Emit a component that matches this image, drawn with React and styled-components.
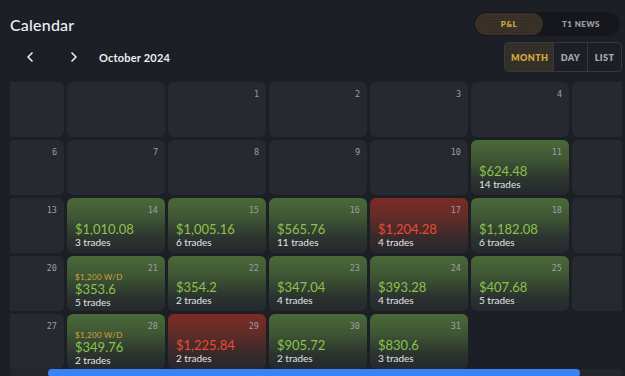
import React, { useLayoutEffect, useRef, useState } from 'react'
import styled, { createGlobalStyle, css } from 'styled-components'
import { ChevronLeft, ChevronRight } from 'lucide-react'

const GlobalStyle = createGlobalStyle`
  html, body {
    margin: 0;
    padding: 0;
    background: #1c1f26;
    overflow: hidden;
  }
  * {
    box-sizing: border-box;
  }
`

const Page = styled.div`
  padding: 12px 3px 0 10px;
  font-family: Lato, "Noto Sans", sans-serif;
  color: #eceef1;
`

const TopBar = styled.div`
  display: flex;
  justify-content: space-between;
  align-items: center;
  height: 24px;
`

const Title = styled.h1`
  margin: 0;
  font-size: 16px;
  font-weight: 500;
  letter-spacing: 0.2px;
`

const Tabs = styled.div`
  display: flex;
  padding: 1px;
  margin-right: 2px;
  border-radius: 12px;
  background: #15171c;
`

const dots = css`
  background-image: radial-gradient(rgba(0, 0, 0, 0.18) 0.6px, transparent 0.8px);
  background-size: 3px 3px;
`

const Tab = styled.button`
  width: ${p => p.$w}px;
  height: 22px;
  border: 0;
  border-radius: 11px;
  font-family: inherit;
  font-size: 8px;
  font-weight: 800;
  letter-spacing: 0.4px;
  color: ${p => (p.$active ? '#d2a63c' : '#9a9da4')};
  background-color: ${p => (p.$active ? '#3a3228' : 'transparent')};
  ${p => p.$active && dots}
`

const SubBar = styled.div`
  display: flex;
  justify-content: space-between;
  align-items: center;
  height: 30px;
  margin-top: 6px;
`

const Nav = styled.div`
  display: flex;
  align-items: center;
  padding-left: 5px;
`

const NavButton = styled.button`
  display: flex;
  align-items: center;
  justify-content: center;
  width: 30px;
  height: 28px;
  padding: 0;
  margin-right: ${p => p.$gap || 0}px;
  border: 0;
  background: transparent;
  color: #eceef1;
`

const MonthLabel = styled.span`
  margin-left: 10px;
  font-size: 11px;
  font-weight: 700;
  letter-spacing: 0.2px;
`

const Segmented = styled.div`
  display: flex;
  height: 30px;
  border: 1px solid #353840;
  border-radius: 4px;
  overflow: hidden;
`

const Segment = styled.button`
  width: ${p => p.$w}px;
  border: 0;
  border-left: ${p => (p.$first ? '0' : '1px solid #353840')};
  font-family: inherit;
  font-size: 9px;
  font-weight: 800;
  letter-spacing: 0.4px;
  color: ${p => (p.$active ? '#d2a63c' : '#a4a7ad')};
  background-color: ${p => (p.$active ? '#35302a' : 'transparent')};
  ${p => p.$active && dots}
`

const Scroller = styled.div`
  margin-top: 10px;
  overflow-x: auto;
  overflow-y: hidden;
  scrollbar-width: none;

  &::-webkit-scrollbar {
    display: none;
  }
`

const ScrollTrack = styled.div`
  display: flex;
  height: 8px;
  border-radius: 4px;
  background: #23262c;
`

const ScrollThumb = styled.div`
  height: 100%;
  border-radius: 4px;
  background: #3b82f6;
`

const Grid = styled.div`
  display: grid;
  grid-template-columns: repeat(7, 98px);
  grid-auto-rows: 55px;
  gap: 3px;
  width: max-content;
`

const tones = {
  win: 'linear-gradient(180deg, #4a6938 0%, #3f5734 35%, #2c342f 72%, #25282d 100%)',
  loss: 'linear-gradient(180deg, #7c2b25 0%, #622c27 35%, #382a2b 72%, #27272c 100%)',
}

const Cell = styled.div`
  display: flex;
  flex-direction: column;
  padding: 7px 7px 5px 8px;
  border-radius: 6px;
  background: ${p => (p.$tone ? tones[p.$tone] : '#262930')};
`

const DayNum = styled.span`
  align-self: flex-end;
  font-family: "DejaVu Sans Mono", "Liberation Mono", monospace;
  font-size: 8.5px;
  line-height: 10px;
  color: #9b9ea5;
`

const Body = styled.div`
  margin-top: auto;
  display: flex;
  flex-direction: column;
`

const Withdrawal = styled.span`
  font-size: 8px;
  line-height: 9px;
  letter-spacing: 0.3px;
  color: #d2a43a;
`

const Amount = styled.span`
  font-size: 13px;
  line-height: 14px;
  color: ${p => (p.$loss ? '#ec4a35' : '#8cc24b')};
`

const Trades = styled.span`
  font-size: 10px;
  line-height: 12px;
  color: #e3e4e7;
`

const stats = {
  11: ['$624.48', 14],
  14: ['$1,010.08', 3],
  15: ['$1,005.16', 6],
  16: ['$565.76', 11],
  17: ['$1,204.28', 4, true],
  18: ['$1,182.08', 6],
  21: ['$353.6', 5, false, '$1,200 W/D'],
  22: ['$354.2', 2],
  23: ['$347.04', 4],
  24: ['$393.28', 4],
  25: ['$407.68', 5],
  28: ['$349.76', 2, false, '$1,200 W/D'],
  29: ['$1,225.84', 2, true],
  30: ['$905.72', 2],
  31: ['$830.6', 3],
}

function DayCell ({ day }) {
  const s = stats[day]
  if (!s) {
    return (
      <Cell>
        <DayNum>{day}</DayNum>
      </Cell>
    )
  }
  const [amount, trades, loss, wd] = s
  return (
    <Cell $tone={loss ? 'loss' : 'win'}>
      <DayNum>{day}</DayNum>
      <Body>
        {wd && <Withdrawal>{wd}</Withdrawal>}
        <Amount $loss={loss}>{amount}</Amount>
        <Trades>{trades} trades</Trades>
      </Body>
    </Cell>
  )
}

export default function App () {
  const scroller = useRef(null)
  const [bar, setBar] = useState({ left: 0, width: 100 })

  const measure = () => {
    const el = scroller.current
    if (!el) return
    setBar({
      left: (el.scrollLeft / el.scrollWidth) * 100,
      width: (el.clientWidth / el.scrollWidth) * 100,
    })
  }

  useLayoutEffect(() => {
    if (scroller.current) scroller.current.scrollLeft = 44
    measure()
  }, [])

  const cells = []
  for (let i = 0; i < 2; i++) cells.push(<Cell key={'lead' + i} />)
  for (let d = 1; d <= 31; d++) cells.push(<DayCell key={d} day={d} />)

  return (
    <Page>
      <GlobalStyle />
      <TopBar>
        <Title>Calendar</Title>
        <Tabs>
          <Tab $w={68} $active>P&amp;L</Tab>
          <Tab $w={76}>T1 NEWS</Tab>
        </Tabs>
      </TopBar>
      <SubBar>
        <Nav>
          <NavButton $gap={14}><ChevronLeft size={16} strokeWidth={2.5} /></NavButton>
          <NavButton><ChevronRight size={16} strokeWidth={2.5} /></NavButton>
          <MonthLabel>October 2024</MonthLabel>
        </Nav>
        <Segmented>
          <Segment $w={48} $first $active>MONTH</Segment>
          <Segment $w={34}>DAY</Segment>
          <Segment $w={34}>LIST</Segment>
        </Segmented>
      </SubBar>
      <Scroller ref={scroller} onScroll={measure}>
        <Grid>{cells}</Grid>
      </Scroller>
      <ScrollTrack>
        <ScrollThumb style={{ marginLeft: bar.left + '%', width: bar.width + '%' }} />
      </ScrollTrack>
    </Page>
  )
}
